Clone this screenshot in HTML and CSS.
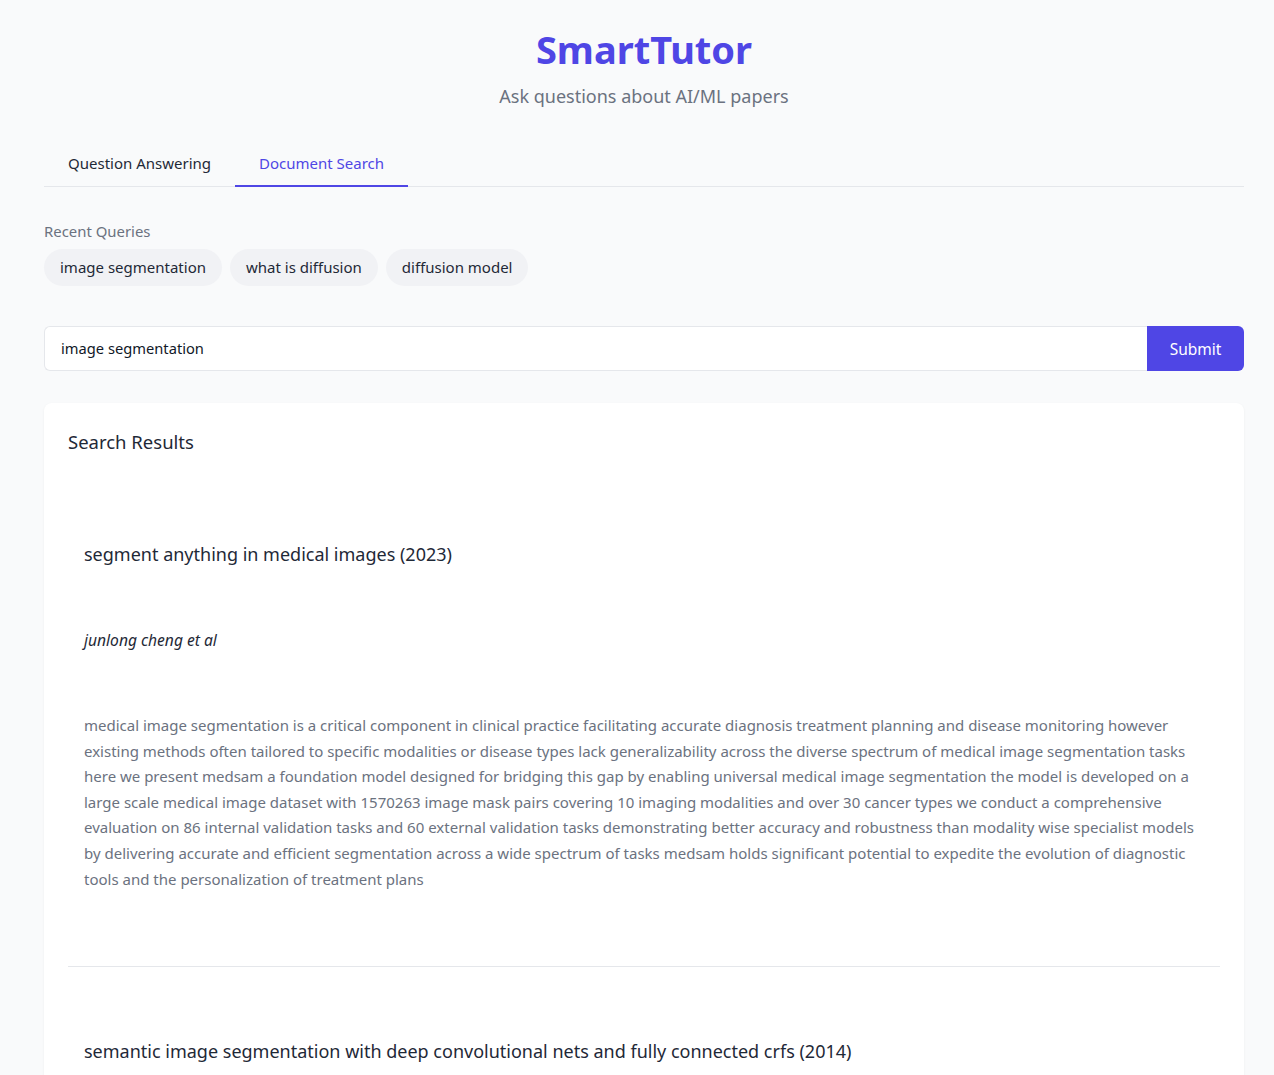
FILE: index.html
```html
<!DOCTYPE html>
<html lang="en">
<head>
<meta charset="utf-8">
<title>SmartTutor</title>
<link rel="stylesheet" href="styles.css">
</head>
<body>
<div class="page">
  <header class="header">
    <h1 class="brand">SmartTutor</h1>
    <p class="tagline">Ask questions about AI/ML papers</p>
  </header>

  <nav class="tabs">
    <button class="tab">Question Answering</button>
    <button class="tab tab-active">Document Search</button>
  </nav>

  <section class="recent">
    <div class="recent-label">Recent Queries</div>
    <div class="chips">
      <button class="chip">image segmentation</button>
      <button class="chip">what is diffusion</button>
      <button class="chip">diffusion model</button>
    </div>
  </section>

  <form class="search">
    <input class="search-input" type="text" value="image segmentation">
    <button class="search-btn" type="button">Submit</button>
  </form>

  <section class="card">
    <h2 class="card-title">Search Results</h2>

    <article class="result">
      <h3 class="result-title">segment anything in medical images (2023)</h3>
      <p class="result-authors">junlong cheng et al</p>
      <p class="result-abstract">medical image segmentation is a critical component in clinical practice facilitating accurate diagnosis treatment planning and disease monitoring however existing methods often tailored to specific modalities or disease types lack generalizability across the diverse spectrum of medical image segmentation tasks here we present medsam a foundation model designed for bridging this gap by enabling universal medical image segmentation the model is developed on a large scale medical image dataset with 1570263 image mask pairs covering 10 imaging modalities and over 30 cancer types we conduct a comprehensive evaluation on 86 internal validation tasks and 60 external validation tasks demonstrating better accuracy and robustness than modality wise specialist models by delivering accurate and efficient segmentation across a wide spectrum of tasks medsam holds significant potential to expedite the evolution of diagnostic tools and the personalization of treatment plans</p>
    </article>

    <article class="result">
      <h3 class="result-title">semantic image segmentation with deep convolutional nets and fully connected crfs (2014)</h3>
      <p class="result-authors">liang-chieh chen et al</p>
      <p class="result-abstract">deep convolutional neural networks have recently shown state of the art performance in high level vision tasks such as image classification and object detection this work brings together methods from dcnns and probabilistic graphical models for addressing the task of pixel level classification also called semantic image segmentation</p>
    </article>
  </section>
</div>
</body>
</html>
```
FILE: styles.css
```css
* { box-sizing: border-box; }

html, body {
  margin: 0;
  background: #f9fafb;
}

body {
  font-family: "Noto Sans", "Open Sans", sans-serif;
  color: #1f2937;
}

.page {
  width: 1200px;
  margin-left: 44px;
  padding-top: 26px;
}

/* Header */
.header {
  text-align: center;
}

.brand {
  margin: 0;
  font-size: 38px;
  line-height: 46px;
  font-weight: 700;
  color: #4f46e5;
}

.tagline {
  margin: 10px 0 0;
  font-size: 18px;
  line-height: 28px;
  color: #6b7280;
}

/* Tabs */
.tabs {
  display: flex;
  margin-top: 31px;
  border-bottom: 1px solid #e5e7eb;
}

.tab {
  font: inherit;
  font-size: 15px;
  line-height: 20px;
  padding: 12px 24px;
  margin-bottom: -1px;
  background: none;
  border: 0;
  border-bottom: 2px solid transparent;
  color: #1f2937;
  cursor: pointer;
}

.tab-active {
  color: #4f46e5;
  border-bottom-color: #4f46e5;
}

/* Recent queries */
.recent {
  margin-top: 34px;
}

.recent-label {
  font-size: 14.9px;
  line-height: 20px;
  color: #6b7280;
}

.chips {
  display: flex;
  gap: 8px;
  margin-top: 8px;
}

.chip {
  font: inherit;
  font-size: 15px;
  line-height: 21px;
  padding: 8px 16px;
  border: 0;
  border-radius: 999px;
  background: #f1f2f5;
  color: #1f2937;
  cursor: pointer;
}

/* Search bar */
.search {
  display: flex;
  margin: 40px 0 0;
}

.search-input {
  flex: 1;
  font: inherit;
  font-size: 14.7px;
  line-height: 21px;
  padding: 11px 16px;
  border: 1px solid #e5e7eb;
  border-right: 0;
  border-radius: 6px 0 0 6px;
  background: #ffffff;
  color: #111827;
  outline: none;
}

.search-btn {
  width: 97px;
  font: inherit;
  font-size: 15.5px;
  border: 0;
  border-radius: 0 6px 6px 0;
  background: #4f46e5;
  color: #ffffff;
  cursor: pointer;
}

/* Results card */
.card {
  margin-top: 32px;
  padding: 25px 24px 24px;
  background: #ffffff;
  border-radius: 8px;
  box-shadow: 0 1px 3px rgba(0, 0, 0, 0.05);
}

.card-title {
  margin: 0 0 14px;
  font-size: 18.5px;
  line-height: 28px;
  font-weight: 400;
  color: #1f2937;
}

.result {
  padding: 70px 16px 74px;
  border-bottom: 1px solid #e5e7eb;
}

.result-title {
  margin: 0 0 60px;
  font-size: 18px;
  line-height: 28px;
  font-weight: 400;
  color: #1f2937;
}

.result-authors {
  margin: 0 0 61px;
  font-size: 15.6px;
  line-height: 24px;
  font-style: italic;
  color: #1f2937;
}

.result-abstract {
  margin: 0;
  font-size: 15px;
  line-height: 25.6px;
  color: #6b7280;
}
```
